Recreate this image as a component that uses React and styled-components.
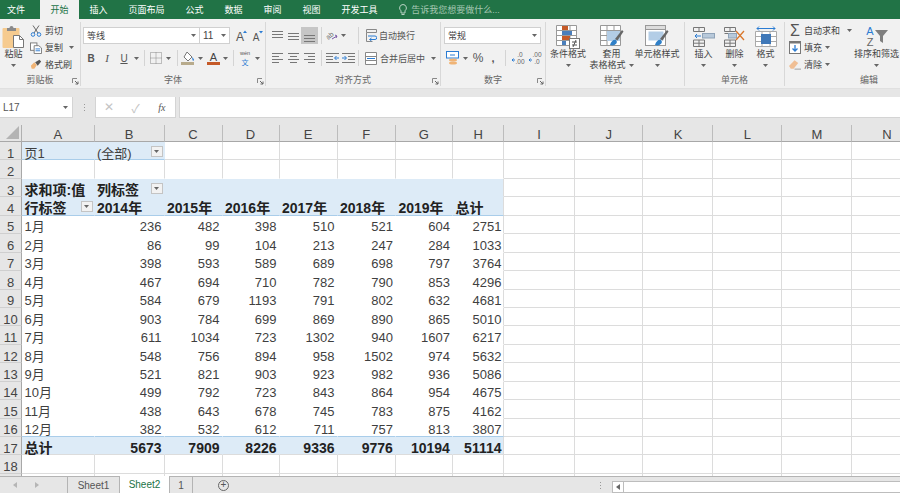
import React from 'react';
import styled, { createGlobalStyle } from 'styled-components';

const FONT = '"Liberation Sans", "Noto Sans CJK SC", sans-serif';

const GlobalStyle = createGlobalStyle`
  html, body {
    margin: 0;
    padding: 0;
    background: #e6e6e6;
    font-family: ${FONT};
  }
`;

/* ---------- small icons ---------- */

const Caret = ({ color = '#666' }) => (
  <svg width="5" height="3" viewBox="0 0 5 3">
    <path d="M0 0h5L2.5 3z" fill={color} />
  </svg>
);

const SideArrow = ({ right, color = '#b5b5b5' }) => (
  <svg width="4" height="6" viewBox="0 0 4 6">
    <path d={right ? 'M0 0l4 3-4 3z' : 'M4 0L0 3l4 3z'} fill={color} />
  </svg>
);

const PasteIcon = () => (
  <svg width="23" height="23" viewBox="0 0 23 23">
    <rect x="0.5" y="3" width="17" height="20" rx="1" fill="#f6cb8f" />
    <path d="M5 3h2.5a2 2 0 0 1 4 0H14v3H5z" fill="#8a8a8a" />
    <path d="M11.5 10.5h6l4 4v8h-10z" fill="#fff" stroke="#777" />
    <path d="M17.5 10.5v4h4" fill="none" stroke="#777" />
  </svg>
);

const ScissorsIcon = () => (
  <svg width="12" height="12" viewBox="0 0 12 12">
    <path d="M3 0.5l5 7.5M9 0.5L4 8" stroke="#666" fill="none" />
    <circle cx="3" cy="9.5" r="1.8" stroke="#2b7cd3" fill="none" />
    <circle cx="9" cy="9.5" r="1.8" stroke="#2b7cd3" fill="none" />
  </svg>
);

const CopyIcon = () => (
  <svg width="13" height="12" viewBox="0 0 13 12">
    <rect x="0.5" y="0.5" width="7" height="8" fill="#fff" stroke="#777" />
    <path d="M4.5 3.5h5l3 2.5v6h-8z" fill="#fff" stroke="#777" />
    <path d="M6 7h5M6 9h5" stroke="#2b7cd3" />
  </svg>
);

const BrushIcon = () => (
  <svg width="14" height="11" viewBox="0 0 14 11">
    <path d="M1 7l4-4 3 3-3 4.5H2z" fill="#f0b476" />
    <path d="M6 3l5-3 2 2-4 5z" fill="#555" />
  </svg>
);

const BorderIcon = () => (
  <svg width="12" height="12" viewBox="0 0 12 12">
    <path d="M.5.5h11v11H.5zM6 .5v11M.5 6h11" fill="none" stroke="#888" strokeDasharray="1 1" />
  </svg>
);

const BucketIcon = () => (
  <svg width="14" height="14" viewBox="0 0 14 14">
    <path d="M6 1l5 5-4 4-4-4z" fill="#fff" stroke="#777" />
    <path d="M11 6c1 1 2 2 2 3s-1.5 1-1.5 0z" fill="#2b7cd3" />
    <rect x="0" y="11" width="13" height="3" fill="#b8ab8c" />
  </svg>
);

const FontColorIcon = () => (
  <svg width="13" height="14" viewBox="0 0 13 14">
    <text x="6.5" y="9.5" fontSize="11" textAnchor="middle" fill="#444" fontFamily="Liberation Sans">A</text>
    <rect x="0" y="11" width="13" height="3" fill="#c55a28" />
  </svg>
);

const WenIcon = () => (
  <svg width="14" height="16" viewBox="0 0 14 16">
    <text x="7" y="5" fontSize="5.5" textAnchor="middle" fill="#555" fontFamily="Liberation Sans">wén</text>
    <text x="7" y="14.5" fontSize="7" textAnchor="middle" fill="#2b7cd3" fontFamily="Noto Sans CJK SC">文</text>
  </svg>
);

const GrowIcon = ({ small }) => (
  <svg width="14" height="16" viewBox="0 0 14 16">
    <text x="6" y="13" fontSize={small ? 10 : 12} textAnchor="middle" fill="#555" fontFamily="Liberation Sans">A</text>
    <path d={small ? 'M9 3h4l-2 2.5z' : 'M9 5h4l-2-2.5z'} fill="#2b7cd3" />
  </svg>
);

const LinesIcon = ({ ys, xs = [] }) => (
  <svg width="13" height="12" viewBox="0 0 13 12">
    {ys.map((y, i) => (
      <path key={y} d={`M${xs[i] ? xs[i][0] : 1} ${y + 0.5}H${xs[i] ? xs[i][1] : 12}`} stroke="#777" />
    ))}
  </svg>
);

const OrientIcon = () => (
  <svg width="16" height="16" viewBox="0 0 16 16">
    <text x="6" y="10" fontSize="7" fill="#666" transform="rotate(-40 6 8)" textAnchor="middle" fontFamily="Liberation Sans">ab</text>
    <path d="M8 11l5-3M11 7l2 1-1 2" stroke="#7a5aa6" fill="none" />
  </svg>
);

const IndentIcon = ({ flip }) => (
  <svg width="13" height="11" viewBox="0 0 13 11">
    <path d={flip ? 'M0 .5h13M6 3.5h7M6 6.5h7M0 9.5h13' : 'M0 .5h13M0 3.5h7M0 6.5h7M0 9.5h13'} stroke="#777" />
    <path d={flip ? 'M0 5h4M2.5 3l2 2-2 2' : 'M13 5H9M10.5 3l-2 2 2 2'} stroke="#2b7cd3" fill="none" />
  </svg>
);

const WrapIcon = () => (
  <svg width="11" height="13" viewBox="0 0 11 13">
    <path d="M.5.5h10v3H.5zM.5 3.5v9h6" fill="none" stroke="#888" />
    <path d="M2 7h7a1 1 0 0 1 0 3.5H4M5.5 9l-2 1.5 2 1.5" fill="none" stroke="#2b7cd3" />
  </svg>
);

const MergeIcon = () => (
  <svg width="12" height="13" viewBox="0 0 12 13">
    <path d="M.5.5h11v12H.5zM.5 4.5h11M.5 8.5h11" fill="#fff" stroke="#888" />
    <path d="M2 6.5h8" stroke="#2b7cd3" />
  </svg>
);

const AccountingIcon = () => (
  <svg width="14" height="14" viewBox="0 0 14 14">
    <rect x="0.5" y="0.5" width="12" height="6.5" fill="#fff" stroke="#2b7cd3" />
    <path d="M4 4h5" stroke="#2b7cd3" />
    <ellipse cx="7" cy="9" rx="4" ry="1.5" fill="#f0b476" />
    <ellipse cx="7" cy="12" rx="4" ry="1.5" fill="#f0b476" />
  </svg>
);

const DecimalIcon = ({ more }) => (
  <svg width="15" height="14" viewBox="0 0 15 14">
    <text x="9" y="6" fontSize="6.5" textAnchor="middle" fill="#666" fontFamily="Liberation Sans">{more ? '.0' : '.00'}</text>
    <text x="9" y="13" fontSize="6.5" textAnchor="middle" fill="#666" fontFamily="Liberation Sans">{more ? '.00' : '.0'}</text>
    <path d="M1 9h3M2.5 7.5L1 9l1.5 1.5" stroke="#2b7cd3" fill="none" />
  </svg>
);

const TableBase = () => (
  <path
    d="M.5.5h20v20H.5zM7 .5v20M14 .5v20M.5 5.5h20M.5 10.5h20M.5 15.5h20"
    fill="#fff"
    stroke="#999"
  />
);

const CondFormatIcon = () => (
  <svg width="24" height="24" viewBox="0 0 24 24">
    <TableBase />
    <rect x="6" y="1" width="6" height="4" fill="#c55a28" />
    <rect x="6" y="6" width="10" height="4" fill="#4a7ebb" />
    <rect x="6" y="11" width="8" height="4" fill="#c55a28" />
    <rect x="6" y="16" width="4" height="4" fill="#4a7ebb" />
    <rect x="13.5" y="13.5" width="10" height="10" fill="#fff" stroke="#777" />
    <path d="M16 17h5M16 20h5M20 15l-3 7" stroke="#555" fill="none" />
  </svg>
);

const TableStyleIcon = () => (
  <svg width="24" height="24" viewBox="0 0 24 24">
    <TableBase />
    <rect x="7" y="6" width="13" height="10" fill="#b3cde6" />
    <path d="M15 14l7-9 1.5 1.5-6 9z" fill="#666" />
    <path d="M10 20c1-4 4-6 6-5l1 2c-1 3-4 4-7 3z" fill="#2f80c8" />
  </svg>
);

const CellStyleIcon = () => (
  <svg width="24" height="24" viewBox="0 0 24 24">
    <rect x="0.5" y="0.5" width="20" height="20" fill="#fff" stroke="#999" />
    <rect x="0.5" y="0.5" width="20" height="4" fill="#ddd" stroke="#999" />
    <rect x="3.5" y="6.5" width="15" height="9" fill="#b3cde6" />
    <path d="M15 14l7-9 1.5 1.5-6 9z" fill="#666" />
    <path d="M10 20c1-4 4-6 6-5l1 2c-1 3-4 4-7 3z" fill="#2f80c8" />
  </svg>
);

const InsertIcon = () => (
  <svg width="22" height="20" viewBox="0 0 22 20">
    <path d="M.5.5h11v4H.5zM6 .5v4M.5 13h11v6.5H.5zM.5 16.2h11M6 13v6.5" fill="none" stroke="#777" />
    <rect x="9.5" y="6.5" width="12" height="4.5" fill="#b8c9da" stroke="#8fa3b8" />
    <path d="M8 9H2M4 7L2 9l2 2" fill="none" stroke="#2b7cd3" />
  </svg>
);

const DeleteIcon = () => (
  <svg width="22" height="20" viewBox="0 0 22 20">
    <path d="M.5.5h11v4H.5zM6 .5v4M.5 13h11v6.5H.5zM.5 16.2h11M6 13v6.5M.5 6.5h5" fill="none" stroke="#777" />
    <rect x="4.5" y="6.5" width="8" height="4.5" fill="#b8c9da" stroke="#8fa3b8" />
    <path d="M12 4l8 9M20 4l-8 9" stroke="#d9772c" strokeWidth="1.3" />
  </svg>
);

const FormatCellIcon = () => (
  <svg width="22" height="22" viewBox="0 0 22 22">
    <path d="M2 2.5h18M4 4.5l-2-2 2-2M18 .5l2 2-2 2" fill="none" stroke="#2b7cd3" />
    <path d="M.5 5.5h21v15H.5zM7 5.5v15M15 5.5v15M.5 10.5h21M.5 15.5h21" fill="#fff" stroke="#aaa" />
    <rect x="6" y="8" width="10" height="10" fill="#3f78b8" />
  </svg>
);

const FillIcon = () => (
  <svg width="12" height="13" viewBox="0 0 12 13">
    <rect x="0.5" y="0.5" width="11" height="12" fill="#fff" stroke="#777" />
    <rect x="0.5" y="0.5" width="11" height="2" fill="#777" />
    <path d="M6 4v6M3.5 7.5L6 10l2.5-2.5" fill="none" stroke="#2b7cd3" strokeWidth="1.3" />
  </svg>
);

const EraserIcon = () => (
  <svg width="13" height="11" viewBox="0 0 13 11">
    <path d="M0 7l6-6 4 3-5 6H2z" fill="#f0bf95" />
    <path d="M6 10.5h7" stroke="#999" />
  </svg>
);

const SortIcon = () => (
  <svg width="24" height="24" viewBox="0 0 24 24">
    <text x="5" y="10" fontSize="11" textAnchor="middle" fill="#2b7cd3" fontFamily="Liberation Sans">A</text>
    <text x="5" y="21" fontSize="11" textAnchor="middle" fill="#666" fontFamily="Liberation Sans">Z</text>
    <path d="M10 5h13l-5 6v7l-3-2v-5z" fill="#7f7f7f" />
  </svg>
);

const LauncherIcon = () => (
  <svg width="7" height="7" viewBox="0 0 7 7">
    <path d="M.5 5V.5H5" fill="none" stroke="#888" />
    <path d="M3 3l3 3M6 3.5V6H3.5" fill="none" stroke="#666" />
  </svg>
);

/* ---------- title bar ---------- */

const Page = styled.div`
  display: flex;
  flex-direction: column;
  width: 900px;
  height: 493px;
  overflow: hidden;
  background: #e6e6e6;
`;

const TitleBar = styled.div`
  display: flex;
  align-items: stretch;
  height: 19px;
  background: #217346;
  flex: none;
`;

const FileTab = styled.div`
  display: flex;
  align-items: center;
  width: 33px;
  padding-left: 7px;
  font-size: 9px;
  color: #fff;
`;

const Tab = styled.div`
  display: flex;
  align-items: center;
  padding: 0 10.5px;
  font-size: 9px;
  color: ${p => (p.$active ? '#217346' : '#fff')};
  background: ${p => (p.$active ? '#f1f1f1' : 'transparent')};
`;

const TellMe = styled.div`
  display: flex;
  align-items: center;
  gap: 4px;
  margin-left: 11px;
  font-size: 9px;
  color: #a5c7b3;
`;

/* ---------- ribbon ---------- */

const Ribbon = styled.div`
  display: flex;
  height: 69px;
  background: #f1f1f1;
  flex: none;
`;

const Group = styled.div`
  position: relative;
  display: flex;
  flex-direction: column;
  width: ${p => p.$w}px;
  margin: 3px 0 2px;
  border-right: ${p => (p.$last ? 'none' : '1px solid #d8d8d8')};
  box-sizing: border-box;
  flex: none;
`;

const GroupBody = styled.div`
  display: flex;
  flex-direction: ${p => (p.$rows ? 'column' : 'row')};
  height: 53px;
  padding-left: ${p => p.$pl || 0}px;
  padding-top: ${p => p.$pt || 0}px;
  box-sizing: border-box;
`;

const GroupLabel = styled.div`
  height: 11px;
  line-height: 11px;
  text-align: center;
  font-size: 9px;
  color: #666;
  padding-right: ${p => p.$pr || 0}px;
  padding-left: ${p => p.$pl || 0}px;
`;

const Launcher = styled.span`
  position: absolute;
  right: 1px;
  bottom: 1px;
  display: flex;
`;

const LargeButton = styled.div`
  display: flex;
  flex-direction: column;
  align-items: center;
  width: ${p => p.$w}px;
  padding-top: 2px;
  font-size: 9px;
  line-height: 11px;
  color: #444;
  white-space: nowrap;
  flex: none;
`;

const LargeIcon = styled.div`
  display: flex;
  align-items: center;
  justify-content: center;
  height: 25px;
`;

const LargeCaret = styled.div`
  display: flex;
  align-items: center;
  justify-content: center;
  gap: 3px;
  height: 11px;
`;

const SmallColumn = styled.div`
  display: flex;
  flex-direction: column;
  padding-left: ${p => p.$pl || 0}px;
  width: ${p => p.$w}px;
  box-sizing: border-box;
  flex: none;
`;

const SmallRow = styled.div`
  display: flex;
  align-items: center;
  height: 17px;
  font-size: 9px;
  color: #444;
  white-space: nowrap;
`;

const SmallIcon = styled.span`
  display: flex;
  align-items: center;
  justify-content: center;
  width: ${p => p.$w || 12}px;
  margin-right: ${p => p.$mr || 3}px;
  flex: none;
`;

const CaretSlot = styled.span`
  display: flex;
  margin-left: ${p => p.$ml}px;
`;

const ToolRow = styled.div`
  display: flex;
  align-items: center;
  height: ${p => p.$h || 17}px;
  margin-top: ${p => p.$mt || 0}px;
  font-size: 9px;
  color: #444;
  white-space: nowrap;
`;

const Tool = styled.span`
  display: flex;
  align-items: center;
  justify-content: center;
  width: ${p => p.$w}px;
  height: 100%;
  margin-left: ${p => p.$ml || 0}px;
  margin-right: ${p => p.$mr || 0}px;
  background: ${p => (p.$active ? '#c6c6c6' : 'transparent')};
  font-family: ${p => (p.$serif ? '"Liberation Serif", serif' : 'inherit')};
  font-size: ${p => p.$size || 11}px;
  font-weight: ${p => (p.$bold ? 700 : 400)};
  font-style: ${p => (p.$italic ? 'italic' : 'normal')};
  text-decoration: ${p => (p.$under ? 'underline' : 'none')};
  color: #555;
  flex: none;
`;

const ToolSep = styled.span`
  display: flex;
  justify-content: center;
  width: ${p => p.$w}px;
  margin-left: ${p => p.$ml || 0}px;
  height: 100%;
  flex: none;

  &::before {
    content: '';
    width: 1px;
    background: #d4d4d4;
  }
`;

const Select = styled.div`
  display: flex;
  align-items: center;
  width: ${p => p.$w}px;
  height: 17px;
  padding: 0 3px;
  background: #fff;
  box-sizing: border-box;
  border: 1px solid #d0d0d0;
  border-left-width: ${p => (p.$joined ? 0 : 1)}px;
  font-size: ${p => p.$size || 9}px;
  color: #444;
  justify-content: space-between;
  flex: none;
`;

/* ---------- formula bar ---------- */

const Band = styled.div`
  height: 9px;
  border-top: 1px solid #e0e0e0;
  box-sizing: border-box;
  flex: none;
`;

const FormulaBar = styled.div`
  display: flex;
  height: 21px;
  margin-bottom: 7px;
  flex: none;
`;

const NameBox = styled.div`
  display: flex;
  align-items: center;
  justify-content: space-between;
  width: 73px;
  padding: 0 4px 0 3px;
  box-sizing: border-box;
  background: #fff;
  border-bottom: 1px solid #d4d4d4;
  border-right: 1px solid #d4d4d4;
  font-size: 10px;
  color: #555;
`;

const Dots = styled.span`
  display: flex;
  flex-direction: column;
  justify-content: center;
  gap: 2px;
  width: ${p => p.$w}px;
  align-items: center;
  flex: none;

  i {
    width: 1px;
    height: 1px;
    background: #999;
  }
`;

const ActionBox = styled.div`
  display: flex;
  align-items: center;
  width: 81px;
  background: #fff;
  border: 1px solid #d4d4d4;
  border-top: none;
  box-sizing: border-box;
  margin-right: 3px;
  color: #bbb;
  font-size: 12px;
`;

const ActionIcon = styled.span`
  display: flex;
  justify-content: center;
  width: 27px;
  color: ${p => (p.$dark ? '#555' : '#c4c4c4')};
  font-family: ${p => (p.$dark ? '"Liberation Serif", serif' : 'inherit')};
  font-style: ${p => (p.$dark ? 'italic' : 'normal')};
  font-size: ${p => (p.$dark ? 10 : 12)}px;
`;

const FormulaInput = styled.div`
  flex: 1;
  background: #fff;
  border: 1px solid #d4d4d4;
  border-top: none;
  border-right: none;
`;

/* ---------- sheet grid ---------- */

const Sheet = styled.div`
  display: grid;
  grid-template-columns: 22px 72.5px 70px 58px 57px 58px 58.4px 57px 51.6px 70.4px 68.6px 70px 69px 70px 70px;
  grid-template-rows: 17px repeat(19, 18.45px);
  flex: 1;
  min-height: 0;
  overflow: hidden;
  background: #fff;
  color: #3a3a3a;
`;

const Corner = styled.div`
  display: flex;
  align-items: flex-end;
  justify-content: flex-end;
  padding: 0 2px 2px 0;
  background: #e6e6e6;
  border-right: 1px solid #b0b0b0;
  border-bottom: 1px solid #a8a8a8;
  box-sizing: border-box;
`;

const ColHead = styled.div`
  display: flex;
  align-items: center;
  justify-content: center;
  padding-top: 2px;
  background: #e6e6e6;
  border-right: 1px solid #bcbcbc;
  border-bottom: 1px solid #a8a8a8;
  box-sizing: border-box;
  font-size: 13px;
  color: #444;
`;

const RowHead = styled.div`
  display: flex;
  align-items: center;
  justify-content: center;
  padding-top: 5px;
  line-height: 13px;
  background: #e6e6e6;
  border-right: 1px solid #a8a8a8;
  border-bottom: 1px solid #cfcfcf;
  box-sizing: border-box;
  font-size: 13px;
  color: #444;
`;

const Cell = styled.div`
  display: flex;
  align-items: center;
  justify-content: ${p => (p.$right ? 'flex-end' : 'flex-start')};
  padding: 5px ${p => (p.$right ? 2 : 0)}px 0 ${p => (p.$right ? 0 : 2.5)}px;
  min-width: 0;
  box-sizing: border-box;
  background: ${p => (p.$fill ? '#ddebf7' : '#fff')};
  border-right: 1px solid ${p => (p.$noV ? (p.$fill ? '#ddebf7' : '#fff') : '#dcdcdc')};
  border-bottom: 1px solid ${p => (p.$blue ? '#a9cdea' : p.$noH ? (p.$fill ? '#ddebf7' : '#fff') : '#dcdcdc')};
  font-size: ${p => (p.$bold ? 14 : 13)}px;
  font-weight: ${p => (p.$bold ? 700 : 400)};
  color: ${p => (p.$bold ? '#222' : '#3f3f3f')};
  white-space: nowrap;
`;

// text sits low in its cell, as in Excel; it must stay above the next row's fill
const CellText = styled.span`
  position: relative;
  z-index: 1;
  line-height: 13px;
`;

const FilterButton = styled.span`
  display: flex;
  align-items: center;
  justify-content: center;
  width: 12px;
  height: 11px;
  margin-left: auto;
  margin-right: 1px;
  margin-top: -4px;
  background: #f2f2f2;
  border: 1px solid #c4c4c4;
  box-sizing: border-box;
  flex: none;
`;

/* ---------- sheet tabs ---------- */

const SheetBar = styled.div`
  display: flex;
  align-items: stretch;
  height: 16px;
  border-top: 1px solid #b4b4b4;
  background: #e6e6e6;
  flex: none;
`;

const NavArrows = styled.div`
  display: flex;
  align-items: center;
  gap: 18px;
  width: 68px;
  padding-left: 13px;
  box-sizing: border-box;
  border-right: 1px solid #b4b4b4;
`;

const SheetTab = styled.div`
  display: flex;
  align-items: center;
  justify-content: center;
  width: ${p => p.$w}px;
  margin-top: ${p => (p.$active ? -1 : 0)}px;
  background: ${p => (p.$active ? '#fff' : 'transparent')};
  border-right: 1px solid #b4b4b4;
  font-size: 10px;
  color: ${p => (p.$active ? '#217346' : '#555')};
  box-sizing: border-box;
  flex: none;
`;

const AddSheet = styled.div`
  display: flex;
  align-items: center;
  justify-content: center;
  width: 11px;
  height: 11px;
  margin: 2.5px 0 0 25px;
  border: 1px solid #666;
  border-radius: 50%;
  color: #555;
  font-size: 10px;
  line-height: 1;
  box-sizing: border-box;
  flex: none;
`;

const Spacer = styled.div`
  flex: 1;
`;

const Scroll = styled.div`
  display: flex;
  width: 288px;
  margin-top: 4px;
  background: #fff;
  border: 1px solid #bdbdbd;
  border-right: none;
  box-sizing: border-box;
`;

const ScrollArrow = styled.span`
  display: flex;
  align-items: center;
  justify-content: center;
  width: 10px;
  border-right: 1px solid #bdbdbd;
`;

/* ---------- data ---------- */

const COLUMNS = ['A', 'B', 'C', 'D', 'E', 'F', 'G', 'H', 'I', 'J', 'K', 'L', 'M', 'N'];

const DATA = [
  ['1月', 236, 482, 398, 510, 521, 604, 2751],
  ['2月', 86, 99, 104, 213, 247, 284, 1033],
  ['3月', 398, 593, 589, 689, 698, 797, 3764],
  ['4月', 467, 694, 710, 782, 790, 853, 4296],
  ['5月', 584, 679, 1193, 791, 802, 632, 4681],
  ['6月', 903, 784, 699, 869, 890, 865, 5010],
  ['7月', 611, 1034, 723, 1302, 940, 1607, 6217],
  ['8月', 548, 756, 894, 958, 1502, 974, 5632],
  ['9月', 521, 821, 903, 923, 982, 936, 5086],
  ['10月', 499, 792, 723, 843, 864, 954, 4675],
  ['11月', 438, 643, 678, 745, 783, 875, 4162],
  ['12月', 382, 532, 612, 711, 757, 813, 3807],
];

const TOTAL = ['总计', 5673, 7909, 8226, 9336, 9776, 10194, 51114];
const YEARS = ['2014年', '2015年', '2016年', '2017年', '2018年', '2019年', '总计'];

const Filter = () => (
  <FilterButton>
    <Caret />
  </FilterButton>
);

// what goes in one cell of the pivot, by row number and column index
const renderCell = (row, col) => {
  const key = `${row}-${col}`;
  const inPivot = col < 8;
  const lastPivot = col === 7;

  if (row === 1 && col < 2) {
    return (
      <Cell key={key} $fill $noV $blue>
        <CellText>{col === 0 ? '页1' : '(全部)'}</CellText>
        {col === 1 && <Filter />}
      </Cell>
    );
  }
  if (row === 2 && col < 8) {
    return <Cell key={key} $noH />;
  }
  if (row === 3 && inPivot) {
    return (
      <Cell key={key} $fill $bold $noV={!lastPivot} $noH>
        {col === 0 && <CellText>求和项:值</CellText>}
        {col === 1 && <CellText>列标签</CellText>}
        {col === 1 && <Filter />}
      </Cell>
    );
  }
  if (row === 4 && inPivot) {
    return (
      <Cell key={key} $fill $bold $noV={!lastPivot} $blue>
        <CellText>{col === 0 ? '行标签' : YEARS[col - 1]}</CellText>
        {col === 0 && <Filter />}
      </Cell>
    );
  }
  if (row >= 5 && row <= 16 && inPivot) {
    const value = DATA[row - 5][col];
    return (
      <Cell key={key} $right={col > 0} $noV={!lastPivot} $noH={row < 16} $blue={row === 16}>
        <CellText>{value}</CellText>
      </Cell>
    );
  }
  if (row === 17 && inPivot) {
    return (
      <Cell key={key} $fill $bold $right={col > 0} $noV={!lastPivot}>
        <CellText>{TOTAL[col]}</CellText>
      </Cell>
    );
  }
  return <Cell key={key} />;
};

const ROW_NUMBERS = Array.from({ length: 19 }, (_, i) => i + 1);

const App = () => (
  <Page>
    <GlobalStyle />
    <TitleBar>
      <FileTab>文件</FileTab>
      <Tab $active>开始</Tab>
      <Tab>插入</Tab>
      <Tab>页面布局</Tab>
      <Tab>公式</Tab>
      <Tab>数据</Tab>
      <Tab>审阅</Tab>
      <Tab>视图</Tab>
      <Tab>开发工具</Tab>
      <TellMe>
        <svg width="8" height="12" viewBox="0 0 8 12">
          <path d="M4 .5a3.5 3.5 0 0 1 2 6.3V9H2V6.8A3.5 3.5 0 0 1 4 .5zM2.5 10.5h3" fill="none" stroke="#b9d3c4" />
        </svg>
        告诉我您想要做什么...
      </TellMe>
    </TitleBar>

    <Ribbon>
      <Group $w={81}>
        <GroupBody>
          <LargeButton $w={27}>
            <LargeIcon>
              <PasteIcon />
            </LargeIcon>
            <span>粘贴</span>
            <LargeCaret>
              <Caret />
            </LargeCaret>
          </LargeButton>
          <SmallColumn $pl={3} $w={54}>
            <SmallRow>
              <SmallIcon>
                <ScissorsIcon />
              </SmallIcon>
              剪切
            </SmallRow>
            <SmallRow>
              <SmallIcon>
                <CopyIcon />
              </SmallIcon>
              复制
              <CaretSlot $ml={6}>
                <Caret />
              </CaretSlot>
            </SmallRow>
            <SmallRow>
              <SmallIcon>
                <BrushIcon />
              </SmallIcon>
              格式刷
            </SmallRow>
          </SmallColumn>
        </GroupBody>
        <GroupLabel>剪贴板</GroupLabel>
        <Launcher>
          <LauncherIcon />
        </Launcher>
      </Group>

      <Group $w={185}>
        <GroupBody $rows $pl={2} $pt={5}>
          <ToolRow>
            <Select $w={117}>
              等线
              <Caret />
            </Select>
            <Select $w={30} $joined $size={10}>
              11
              <Caret />
            </Select>
            <Tool $w={14} $ml={4}>
              <GrowIcon />
            </Tool>
            <Tool $w={14} $ml={2}>
              <GrowIcon small />
            </Tool>
          </ToolRow>
          <ToolRow $h={16} $mt={6}>
            <Tool $w={16} $bold $size={10}>B</Tool>
            <Tool $w={16} $italic $serif $size={11}>I</Tool>
            <Tool $w={18} $under $size={10}>U</Tool>
            <Tool $w={6}><Caret /></Tool>
            <ToolSep $w={10} />
            <Tool $w={14}><BorderIcon /></Tool>
            <Tool $w={10}><Caret /></Tool>
            <ToolSep $w={8} />
            <Tool $w={14}><BucketIcon /></Tool>
            <Tool $w={10}><Caret /></Tool>
            <Tool $w={16}><FontColorIcon /></Tool>
            <Tool $w={8}><Caret /></Tool>
            <ToolSep $w={8} />
            <Tool $w={16}><WenIcon /></Tool>
            <Tool $w={8}><Caret /></Tool>
          </ToolRow>
        </GroupBody>
        <GroupLabel>字体</GroupLabel>
        <Launcher>
          <LauncherIcon />
        </Launcher>
      </Group>

      <Group $w={175}>
        <GroupBody $rows $pl={3} $pt={5}>
          <ToolRow>
            <Tool $w={16}><LinesIcon ys={[1, 4, 7]} /></Tool>
            <Tool $w={16}><LinesIcon ys={[3, 6, 9]} /></Tool>
            <Tool $w={17} $active><LinesIcon ys={[5, 8, 11]} /></Tool>
            <ToolSep $w={6} />
            <Tool $w={16}><OrientIcon /></Tool>
            <Tool $w={6}><Caret /></Tool>
            <ToolSep $w={14} $ml={5} />
            <Tool $w={12}><WrapIcon /></Tool>
            <Tool $w={36} $ml={2} $size={9}>自动换行</Tool>
          </ToolRow>
          <ToolRow $h={16} $mt={6}>
            <Tool $w={16}><LinesIcon ys={[1, 4, 7, 10]} xs={[[1, 12], [1, 8], [1, 12], [1, 8]]} /></Tool>
            <Tool $w={16}><LinesIcon ys={[1, 4, 7, 10]} xs={[[1, 12], [3, 10], [1, 12], [3, 10]]} /></Tool>
            <Tool $w={17}><LinesIcon ys={[1, 4, 7, 10]} xs={[[1, 12], [5, 12], [1, 12], [5, 12]]} /></Tool>
            <ToolSep $w={6} />
            <Tool $w={16}><IndentIcon /></Tool>
            <Tool $w={16}><IndentIcon flip /></Tool>
            <ToolSep $w={4} />
            <Tool $w={12} $ml={5}><MergeIcon /></Tool>
            <Tool $w={45} $ml={3} $size={9}>合并后居中</Tool>
            <Tool $w={5} $ml={6}><Caret /></Tool>
          </ToolRow>
        </GroupBody>
        <GroupLabel>对齐方式</GroupLabel>
        <Launcher>
          <LauncherIcon />
        </Launcher>
      </Group>

      <Group $w={105}>
        <GroupBody $rows $pl={3} $pt={5}>
          <ToolRow>
            <Select $w={97}>
              常规
              <Caret />
            </Select>
          </ToolRow>
          <ToolRow $h={16} $mt={6}>
            <Tool $w={17}><AccountingIcon /></Tool>
            <Tool $w={8}><Caret /></Tool>
            <Tool $w={16} $ml={1} $size={12}>%</Tool>
            <Tool $w={14} $bold $size={11}>,</Tool>
            <ToolSep $w={10} />
            <Tool $w={16}><DecimalIcon more /></Tool>
            <Tool $w={18}><DecimalIcon /></Tool>
          </ToolRow>
        </GroupBody>
        <GroupLabel>数字</GroupLabel>
        <Launcher>
          <LauncherIcon />
        </Launcher>
      </Group>

      <Group $w={139}>
        <GroupBody>
          <LargeButton $w={44}>
            <LargeIcon><CondFormatIcon /></LargeIcon>
            <span>条件格式</span>
            <LargeCaret><Caret /></LargeCaret>
          </LargeButton>
          <LargeButton $w={43}>
            <LargeIcon><TableStyleIcon /></LargeIcon>
            <span>套用</span>
            <LargeCaret>表格格式<Caret /></LargeCaret>
          </LargeButton>
          <LargeButton $w={48}>
            <LargeIcon><CellStyleIcon /></LargeIcon>
            <span>单元格样式</span>
            <LargeCaret><Caret /></LargeCaret>
          </LargeButton>
        </GroupBody>
        <GroupLabel $pr={4}>样式</GroupLabel>
      </Group>

      <Group $w={100}>
        <GroupBody $pl={3}>
          <LargeButton $w={31}>
            <LargeIcon><InsertIcon /></LargeIcon>
            <span>插入</span>
            <LargeCaret><Caret /></LargeCaret>
          </LargeButton>
          <LargeButton $w={31}>
            <LargeIcon><DeleteIcon /></LargeIcon>
            <span>删除</span>
            <LargeCaret><Caret /></LargeCaret>
          </LargeButton>
          <LargeButton $w={31}>
            <LargeIcon><FormatCellIcon /></LargeIcon>
            <span>格式</span>
            <LargeCaret><Caret /></LargeCaret>
          </LargeButton>
        </GroupBody>
        <GroupLabel>单元格</GroupLabel>
      </Group>

      <Group $w={114} $last>
        <GroupBody>
          <SmallColumn $pl={4} $w={69}>
            <SmallRow>
              <SmallIcon $mr={3}>
                <Tool $w={12} $size={16}>Σ</Tool>
              </SmallIcon>
              自动求和
              <CaretSlot $ml={7}>
                <Caret />
              </CaretSlot>
            </SmallRow>
            <SmallRow>
              <SmallIcon>
                <FillIcon />
              </SmallIcon>
              填充
              <CaretSlot $ml={3}>
                <Caret />
              </CaretSlot>
            </SmallRow>
            <SmallRow>
              <SmallIcon>
                <EraserIcon />
              </SmallIcon>
              清除
              <CaretSlot $ml={3}>
                <Caret />
              </CaretSlot>
            </SmallRow>
          </SmallColumn>
          <LargeButton $w={45}>
            <LargeIcon><SortIcon /></LargeIcon>
            <span>排序和筛选</span>
            <LargeCaret><Caret /></LargeCaret>
          </LargeButton>
        </GroupBody>
        <GroupLabel $pl={54}>编辑</GroupLabel>
      </Group>
    </Ribbon>

    <Band />

    <FormulaBar>
      <NameBox>
        L17
        <Caret />
      </NameBox>
      <Dots $w={22}>
        <i />
        <i />
        <i />
      </Dots>
      <ActionBox>
        <ActionIcon>✕</ActionIcon>
        <ActionIcon>✓</ActionIcon>
        <ActionIcon $dark>fx</ActionIcon>
      </ActionBox>
      <FormulaInput />
    </FormulaBar>

    <Sheet>
      <Corner>
        <svg width="13" height="13" viewBox="0 0 13 13">
          <path d="M13 0v13H0z" fill="#b4b4b4" />
        </svg>
      </Corner>
      {COLUMNS.map(c => (
        <ColHead key={c}>{c}</ColHead>
      ))}
      {ROW_NUMBERS.map(row => (
        <React.Fragment key={row}>
          <RowHead>{row}</RowHead>
          {COLUMNS.map((_, col) => renderCell(row, col))}
        </React.Fragment>
      ))}
    </Sheet>

    <SheetBar>
      <NavArrows>
        <SideArrow />
        <SideArrow right />
      </NavArrows>
      <SheetTab $w={52}>Sheet1</SheetTab>
      <SheetTab $w={50} $active>Sheet2</SheetTab>
      <SheetTab $w={23}>1</SheetTab>
      <AddSheet>+</AddSheet>
      <Spacer />
      <Dots $w={24}>
        <i />
        <i />
        <i />
      </Dots>
      <Scroll>
        <ScrollArrow>
          <SideArrow color="#666" />
        </ScrollArrow>
      </Scroll>
    </SheetBar>
  </Page>
);

export default App;
